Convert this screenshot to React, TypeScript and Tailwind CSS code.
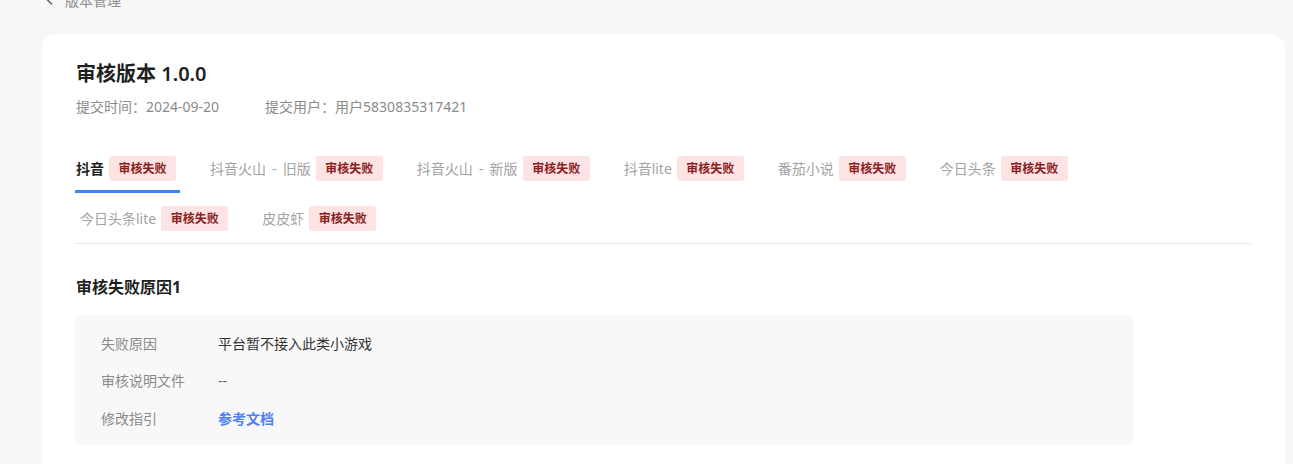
import React from 'react';

const font = "font-['Noto_Sans','Noto_Sans_CJK_SC',sans-serif]";

type Tab = { name: string; active?: boolean };

const row1: Tab[] = [
  { name: '抖音', active: true },
  { name: '抖音火山 - 旧版' },
  { name: '抖音火山 - 新版' },
  { name: '抖音lite' },
  { name: '番茄小说' },
  { name: '今日头条' },
];

const row2: Tab[] = [{ name: '今日头条lite' }, { name: '皮皮虾' }];

const TabItem: React.FC<{ tab: Tab }> = ({ tab }) => (
  <div className="relative h-[37px] flex items-start">
    <div className="h-[25px] flex items-center gap-[5px]">
      <span
        className={
          tab.active
            ? 'text-[14px] font-bold text-[#1f1f1f] [word-spacing:2.5px]'
            : 'text-[14px] text-[#a3a3a3] [word-spacing:2.5px]'
        }
      >
        {tab.name}
      </span>
      <span className="h-[25px] px-[9.5px] flex items-center rounded-[3px] bg-[#fde3e3] text-[12px] font-bold text-[#8a1f1f]">
        审核失败
      </span>
    </div>
    {tab.active && (
      <div className="absolute left-[-1px] right-[-4px] bottom-[0px] h-[3px] bg-[#3d87f5]" />
    )}
  </div>
);

const InfoRow: React.FC<{ label: string; children: React.ReactNode }> = ({ label, children }) => (
  <div className="flex items-center h-[22px] text-[14px]">
    <div className="w-[117px] text-[#8a8a8a]">{label}</div>
    <div>{children}</div>
  </div>
);

const App: React.FC = () => {
  return (
    <div className={`min-h-[464px] bg-[#f7f7f7] overflow-hidden ${font}`}>
      <div className="-mt-[10px] h-[20px] pl-[44px] flex items-center gap-[9px] text-[14px] text-[#8c8c8c]">
        <svg width="12" height="12" viewBox="0 0 12 12" fill="none" stroke="#666" strokeWidth="1.6">
          <path d="M8 1.5 3.5 6 8 10.5" />
        </svg>
        <span>版本管理</span>
      </div>
      <div className="mt-[24px] ml-[42px] mr-[8px] bg-white rounded-[14px] pt-[26px] px-[34px] pb-[40px]">
        <h1 className="text-[20px] leading-[28px] font-semibold text-[#1f1f1f]">审核版本 1.0.0</h1>
        <div className="mt-[9px] flex items-center gap-[46px] text-[14px] leading-[20px] text-[#8a8a8a]">
          <span>提交时间：2024-09-20</span>
          <span>提交用户：用户5830835317421</span>
        </div>

        <div className="mt-[39px] flex flex-col gap-[13px] border-b border-[#ebebeb] -ml-px">
          <div className="flex gap-[34px] pl-px">
            {row1.map((t) => (
              <TabItem key={t.name} tab={t} />
            ))}
          </div>
          <div className="flex gap-[34px] pl-[5px]">
            {row2.map((t) => (
              <TabItem key={t.name} tab={t} />
            ))}
          </div>
        </div>

        <h2 className="mt-[31px] text-[16px] leading-[24px] font-bold text-[#1f1f1f]">审核失败原因1</h2>
        <div className="mt-[16px] -ml-px w-[1059px] bg-[#f8f8f8] rounded-[8px] pt-[17px] pb-[16px] pl-[26px] flex flex-col gap-[15.5px]">
          <InfoRow label="失败原因">
            <span className="text-[#333]">平台暂不接入此类小游戏</span>
          </InfoRow>
          <InfoRow label="审核说明文件">
            <span className="text-[#666]">--</span>
          </InfoRow>
          <InfoRow label="修改指引">
            <a className="font-bold text-[#4f80f5] cursor-pointer">参考文档</a>
          </InfoRow>
        </div>
      </div>
    </div>
  );
};

export default App;
